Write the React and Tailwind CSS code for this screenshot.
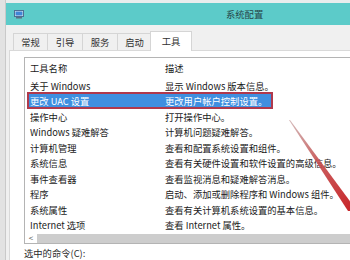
import React from "react";

const rows = [
  ["关于 Windows", "显示 Windows 版本信息。"],
  ["更改 UAC 设置", "更改用户帐户控制设置。"],
  ["操作中心", "打开操作中心。"],
  ["Windows 疑难解答", "计算机问题疑难解答。"],
  ["计算机管理", "查看和配置系统设置和组件。"],
  ["系统信息", "查看有关硬件设置和软件设置的高级信息。"],
  ["事件查看器", "查看监视消息和疑难解答消息。"],
  ["程序", "启动、添加或删除程序和 Windows 组件。"],
  ["系统属性", "查看有关计算机系统设置的基本信息。"],
  ["Internet 选项", "查看 Internet 属性。"],
];

const tabs = [
  ["常规", "w-[34px]"],
  ["引导", "w-[35px]"],
  ["服务", "w-[35px]"],
  ["启动", "w-[34px]"],
];

export default function App() {
  return (
    <div className="relative w-[350px] h-[260px] overflow-hidden flex bg-[#f0f0f0] text-[#1a1a1a] font-['Noto_Sans_CJK_SC','Noto_Sans',sans-serif] text-[9.3px] leading-[12px]">
      {/* left frame strip */}
      <div className="w-[6px] shrink-0 bg-[#e2e2e2] border-r border-[#c9c9c9]" />
      <div className="flex-1 flex flex-col min-w-0">
        <div className="h-[3px] bg-[#e9eded]" />
        {/* title bar */}
        <div className="h-[22px] bg-[#5ccbc9] flex items-center">
          <svg className="ml-[8px] shrink-0" width="10" height="9" viewBox="0 0 10 9">
            <rect x="0.5" y="0.5" width="9" height="6" fill="#dfe8f0" stroke="#4d6f94" />
            <rect x="1.5" y="1.5" width="7" height="4" fill="#3f86d6" />
            <rect x="2" y="7" width="6" height="1.5" fill="#5a6f86" />
          </svg>
          <span className="ml-[202px] text-[#27474a] whitespace-nowrap">系统配置</span>
        </div>
        {/* body */}
        <div className="flex-1 flex flex-col pl-[3px] pt-[6px] min-h-0">
          {/* tabs */}
          <div className="flex items-end h-[20px] pl-[4px] relative z-10 -mb-[1px]">
            {tabs.map(([t, w]) => (
              <div
                key={t}
                className={`${w} h-[17px] mb-[1px] flex items-center justify-center border-t border-l border-[#d5d5d5] bg-[#f0f0f0] text-[#303030]`}
              >
                {t}
              </div>
            ))}
            <div className="w-[42px] h-[20px] -ml-[1px] flex items-center justify-center border-t border-l border-r border-[#d5d5d5] bg-white text-[#303030] pb-[1px]">
              工具
            </div>
          </div>
          {/* panel */}
          <div className="flex-1 bg-white border-t border-l border-[#d9d9d9] pl-[14px] pt-[6px] min-h-0">
            <div className="w-[360px] border border-[#b4b4b4] flex flex-col">
              <div className="h-[20px] flex items-center pl-[5px]">
                <div className="w-[135px]">工具名称</div>
                <div>描述</div>
              </div>
              {rows.map(([a, b], i) => (
                <div key={a} className="relative h-[15.5px] flex items-center pl-[5px] whitespace-nowrap">
                  {i === 1 && (
                    <div className="absolute left-[2px] top-[-1.5px] w-[246px] h-[17px] bg-[#3f8fe0] border-2 border-[#b0394c]" />
                  )}
                  <div className={`relative w-[135px] ${i === 1 ? "text-white" : ""}`}>{a}</div>
                  <div className={`relative ${i === 1 ? "text-white" : ""}`}>{b}</div>
                </div>
              ))}
              {/* horizontal scrollbar */}
              <div className="h-[10px] flex items-center">
                <div className="w-[12px] h-full flex items-center justify-center text-[#505050] text-[8px] leading-none">&lt;</div>
                <div className="flex-1 h-[9px] bg-[#cdcdcd]" />
              </div>
            </div>
            <div className="mt-[3px] text-[#2a2a2a]">选中的命令(C):</div>
          </div>
        </div>
      </div>
      {/* red annotation arrow */}
      <svg className="absolute top-0 left-0 pointer-events-none" width="350" height="260" viewBox="0 0 350 260">
        <defs>
          <linearGradient id="arw" x1="289" y1="120" x2="350" y2="208" gradientUnits="userSpaceOnUse">
            <stop offset="0" stopColor="#b88a8a" stopOpacity="0.6" />
            <stop offset="0.45" stopColor="#c65050" stopOpacity="0.9" />
            <stop offset="1" stopColor="#c8282c" />
          </linearGradient>
        </defs>
        <polygon points="289,120 290,120 352,204 352,211 348,211" fill="url(#arw)" />
      </svg>
    </div>
  );
}
